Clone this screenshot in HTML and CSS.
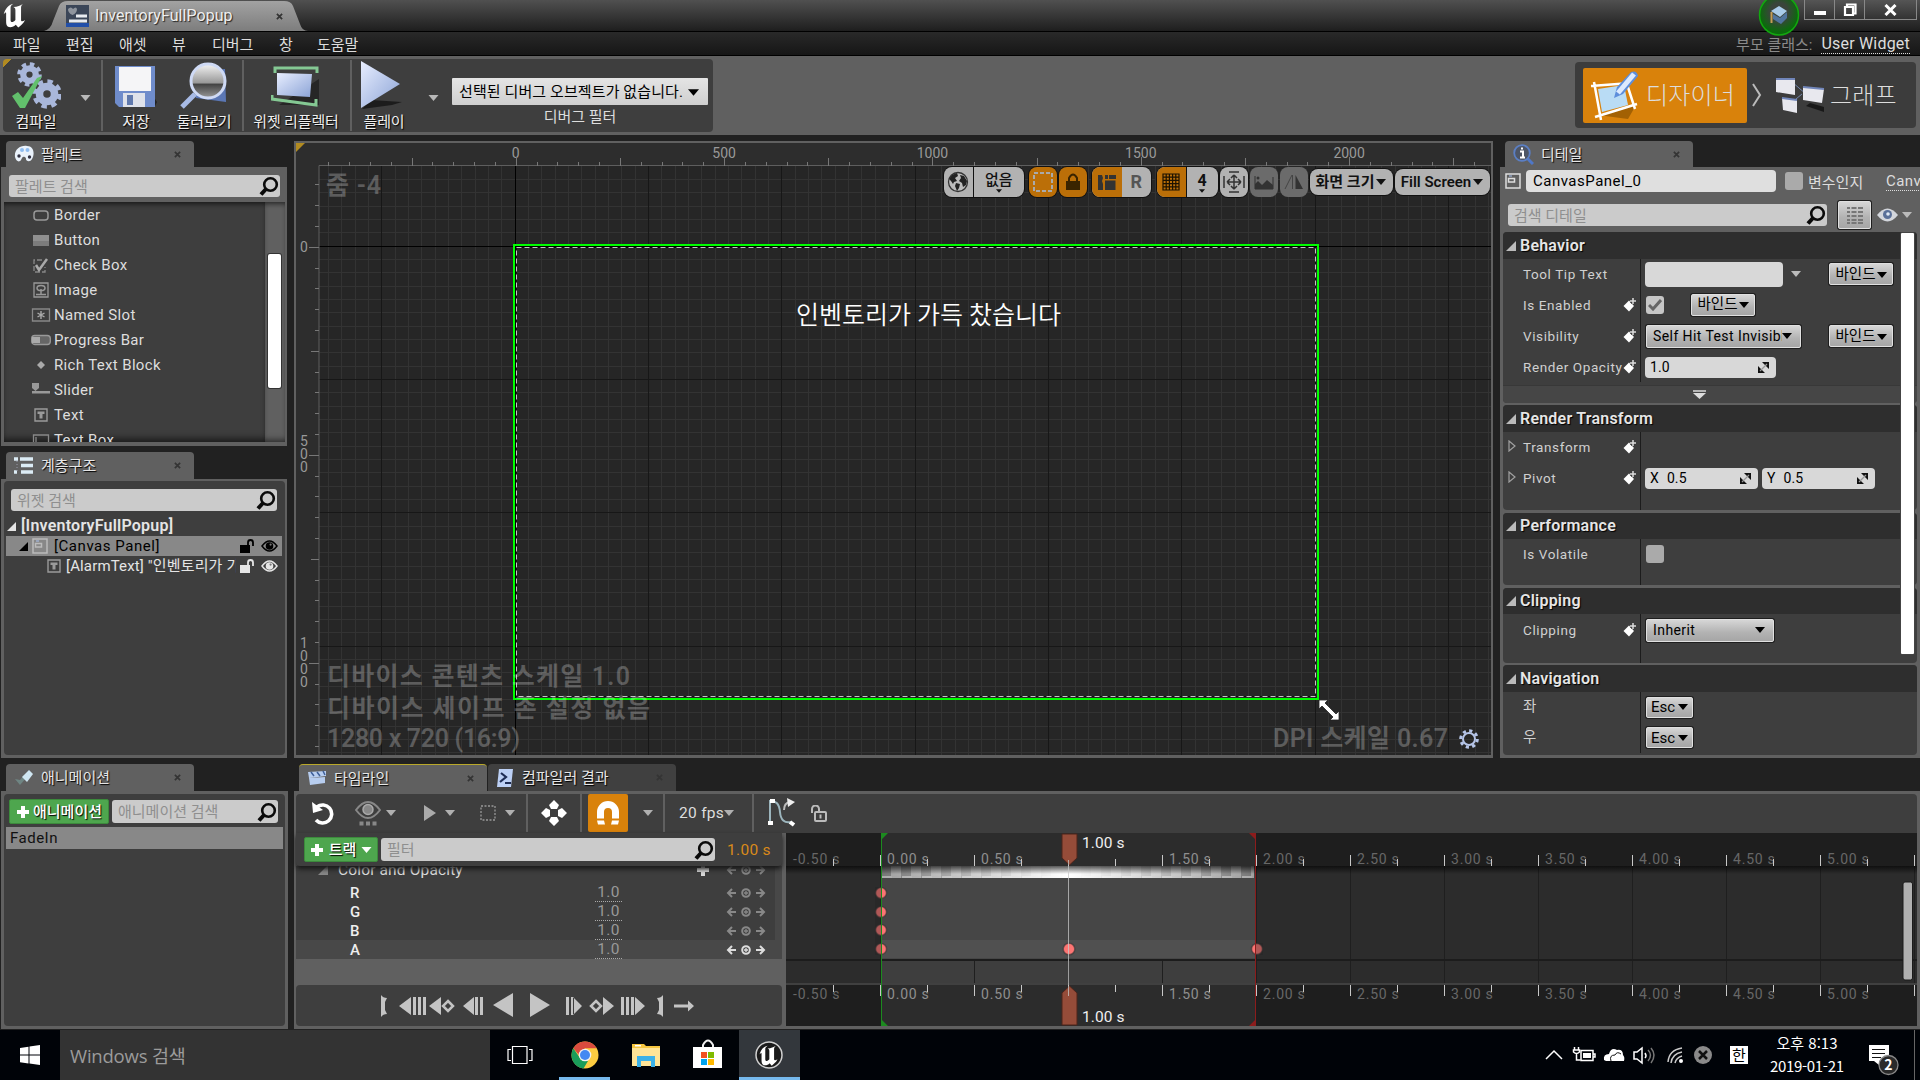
FILE: index.html
```html
<!DOCTYPE html>
<html lang="ko">
<head>
<meta charset="utf-8">
<title>InventoryFullPopup</title>
<link rel="stylesheet" href="styles.css">
</head>
<body>
<svg class="defs" width="0" height="0">
  <defs>
    <linearGradient id="ice" x1="0" y1="0" x2="1" y2="1"><stop offset="0" stop-color="#e8eeff"/><stop offset="1" stop-color="#8ba3d6"/></linearGradient>
    <linearGradient id="lens" x1="0" y1="0" x2="0" y2="1"><stop offset="0" stop-color="#f4f4f4"/><stop offset=".55" stop-color="#999"/><stop offset=".6" stop-color="#444"/><stop offset="1" stop-color="#999"/></linearGradient>
    <symbol id="search" viewBox="0 0 20 20"><circle cx="11.500" cy="8.500" r="6.300" fill="none" stroke="#0a0a0a" stroke-width="2.600"/><path d="M7 13L2 18.500" stroke="#0a0a0a" stroke-width="4"/></symbol>
    <symbol id="close" viewBox="0 0 8 8"><path d="M1 1l6 6M7 1L1 7" stroke="#343434" stroke-width="2"/></symbol>
    <symbol id="down" viewBox="0 0 10 6"><path d="M0 0h10L5 6z" fill="currentColor"/></symbol>
    <symbol id="plus" viewBox="0 0 14 14"><path d="M5 1h4v4h4v4H9v4H5V9H1V5h4z" fill="#fff"/></symbol>
    <symbol id="tri" viewBox="0 0 10 10"><path d="M10 0v10H0z" fill="currentColor"/></symbol>
    <symbol id="key" viewBox="0 0 14 14"><path d="M6 2.500L11 8l-5 5.500L.5 8z" fill="#fff"/><path d="M10 0v6M7 3h6" stroke="#3e3e3e" stroke-width="3.500"/><path d="M10 0v6M7 3h6" stroke="#ddd" stroke-width="1.500"/></symbol>
    <symbol id="spin" viewBox="0 0 11 11"><path d="M4 0h7v7zM0 4v7h7z" fill="#111"/><path d="M2 9l7-7" stroke="#999" stroke-width="1.200"/></symbol>
    <symbol id="gear" viewBox="0 0 24 24"><circle cx="12" cy="12" r="6" fill="none" stroke="currentColor" stroke-width="6"/><circle cx="12" cy="12" r="9.800" fill="none" stroke="currentColor" stroke-width="4" stroke-dasharray="4.200 3.500"/></symbol>
    <symbol id="unlock" viewBox="0 0 16 14"><path d="M1 6h10v8H1z" fill="currentColor"/><path d="M9 6V3.500a2.500 2.500 0 0 1 5 0V7" fill="none" stroke="currentColor" stroke-width="1.800"/></symbol>
    <symbol id="eye" viewBox="0 0 17 12"><path d="M1 6Q8.500-4 16 6 8.500 16 1 6z" fill="none" stroke="currentColor" stroke-width="1.500"/><circle cx="8.500" cy="6" r="3.800" fill="currentColor"/><circle cx="9.600" cy="4.600" r="1.100" fill="#777"/></symbol>
    <symbol id="panel" viewBox="0 0 16 16"><path d="M1 1h14v14H1z" fill="none" stroke="currentColor" stroke-width="1.500"/><path d="M3.500 5.500h6v3.500h-6z" fill="none" stroke="currentColor" stroke-width="1.500"/><path d="M4 3h3" stroke="#a9c2f0"/></symbol>
    <symbol id="tbox" viewBox="0 0 14 14"><path d="M1 1h12v12H1z" fill="none" stroke="#9a9a9a" stroke-width="1.400"/><path d="M3.500 3.500h7V6h-2v4.500h-3V6h-2z" fill="#9a9a9a"/></symbol>
    <symbol id="nav" viewBox="0 0 40 12"><path d="M10 6H3M6 2L2 6l4 4M30 6h7M34 2l4 4-4 4" fill="none" stroke="currentColor" stroke-width="2"/><circle cx="20" cy="6" r="3.800" fill="none" stroke="currentColor" stroke-width="2"/><path d="M20 4v4M18 6h4" stroke="currentColor" stroke-width="1.300"/></symbol>
    <symbol id="ue" viewBox="0 0 28 31"><path d="M0 14C2 7 6 2 12 1c-3 2-3.500 3-3.500 5v15c0 3.500 3 3.500 6 0V9c0-3-1-3-2.500-4 5 0 9-2 12-4-2 2-2.500 3-2.500 5v15c0 2 2 2 5 0-2 5-6 7-8.500 9.500L15 27c-2 2-4 3-7 3-4 0-5-3-5-7V13c0-2-1-1-3 1z" fill="#fff"/></symbol>
  </defs>
</svg>

<header class="titlebar">
  <svg class="ue-logo" preserveAspectRatio="none"><use href="#ue"/></svg>
  <div class="doc-tab">
    <svg width="23" height="22" viewBox="0 0 23 22"><path d="M0 0h23v22H0z" fill="#3b4658"/><path d="M0 18h23v4H0z" fill="#224fa8"/><path d="M2 4q3-3 5 0 3-3 4 0 0 4-4.500 6Q2 8 2 4z" fill="#8f959e"/><path d="M10 11h11M3 16h18" stroke="#e8ebf0" stroke-width="3"/></svg>
    <span>InventoryFullPopup</span>
    <svg class="x" width="7" height="7"><use href="#close"/></svg>
  </div>
  <svg class="tutorial" width="42" height="36" viewBox="0 0 42 36"><defs><radialGradient id="glow" cx=".5" cy=".42"><stop offset=".45" stop-color="#3a443b"/><stop offset="1" stop-color="#0b6a0c"/></radialGradient></defs><ellipse cx="21" cy="15" rx="19.500" ry="20" fill="url(#glow)" stroke="#12a80f" stroke-width="1.500"/><path d="M21 6l8 5-7 6-9-6z" fill="#a9cbe9"/><path d="M15 14l7 4 7-6v6l-6 6-8-5z" fill="#51749d"/><path d="M13.500 12v11" stroke="#c59c57" stroke-width="2"/></svg>
  <div class="win-buttons">
    <span><svg width="14" height="12"><path d="M1 9h12" stroke="#fff" stroke-width="4"/></svg></span>
    <span><svg width="14" height="14"><path d="M4 3V1.500h8.500v9H11M2 4h8v8H2z" fill="none" stroke="#fff" stroke-width="2.200"/></svg></span>
    <span><svg width="13" height="12"><path d="M1.500 1l10 10M11.500 1l-10 10" stroke="#fff" stroke-width="3"/></svg></span>
  </div>
</header>

<nav class="menubar">
  <span class="m1">파일</span><span class="m2">편집</span><span class="m3">애셋</span><span class="m4">뷰</span><span class="m5">디버그</span><span class="m6">창</span><span class="m7">도움말</span>
  <div class="parent"><span class="dim">부모 클래스:</span><a>User Widget</a></div>
</nav>

<section class="toolbar">
  <div class="tools">
    <div class="tool compile">
      <svg width="50" height="48" viewBox="0 0 50 48"><g color="#a9b7da"><use href="#gear" x="6" y="0" width="25" height="25"/><use href="#gear" x="21" y="17" width="30" height="30"/></g><path d="M1 34l6-4 5 6 14-20 5-2-17 32h-5z" fill="#62c06c"/></svg>
      <span>컴파일</span>
    </div>
    <svg class="arrow a1" width="11" height="6"><use href="#down"/></svg>
    <i class="sep"></i>
    <div class="tool save">
      <svg width="44" height="46" viewBox="0 0 44 46"><path d="M5 42l36 0 2-4-4-6z" fill="#222"/><path d="M1 2h40v41H5l-4-4z" fill="#6f8ccb"/><path d="M5 3h32v24H5z" fill="#f5f5f7"/><path d="M9 29h22v14H9z" fill="#dfe2ea"/><path d="M13 31h6v10h-6z" fill="#6079ad"/></svg>
      <span>저장</span>
    </div>
    <div class="tool browse">
      <svg width="50" height="48" viewBox="0 0 50 48"><path d="M12 16l8-7 26-2 1 33-30-4z" fill="#5b77b5"/><path d="M16 32L3 45" stroke="#a8bbe6" stroke-width="5"/><circle cx="29" cy="19" r="17" fill="url(#lens)" stroke="#cfdaf5" stroke-width="3"/></svg>
      <span>둘러보기</span>
    </div>
    <i class="sep"></i>
    <div class="tool reflect">
      <svg width="50" height="42" viewBox="0 0 50 42"><path d="M8 40h40V14z" fill="#262626"/><path d="M6 8l35 1-2 23-33-2z" fill="url(#ice)"/><path d="M4 8V3h42v5M1 30v4l44 6v-6" fill="none" stroke="#84c893" stroke-width="3"/></svg>
      <span>위젯 리플렉터</span>
    </div>
    <i class="sep"></i>
    <div class="tool play">
      <svg width="44" height="50" viewBox="0 0 44 50"><path d="M2 49l9-9 31 2-10 3z" fill="#1c1c1c"/><path d="M1 1l39 23L1 48z" fill="url(#ice)"/></svg>
      <span>플레이</span>
    </div>
    <svg class="arrow a2" width="11" height="6"><use href="#down"/></svg>
    <div class="debug">
      <div class="debug-combo"><span>선택된 디버그 오브젝트가 없습니다.</span><svg width="11" height="7"><use href="#down"/></svg></div>
      <span>디버그 필터</span>
    </div>
  </div>
  <div class="modes">
    <div class="mode active">
      <svg width="54" height="52" viewBox="0 0 54 52"><path d="M10 46l38-10-8 14z" fill="#8c5200" opacity=".7"/><path d="M3 17l40-3M7 48l42-13M6 13l7 38M38 12l9 28" stroke="#fff" stroke-width="2.500"/><path d="M10 20l26-4 4 20-26 7z" fill="#b9dcf5"/><path d="M26 29l3-11L43 3q6-2 7 4L35 25z" fill="#5d8edb"/><path d="M30 24L46 5" stroke="#dceaff" stroke-width="5"/></svg>
      <span>디자이너</span>
    </div>
    <svg class="chev" width="12" height="26"><path d="M2 2l7 11-7 11" fill="none" stroke="#bbb" stroke-width="2"/></svg>
    <div class="mode">
      <svg width="52" height="38" viewBox="0 0 52 38"><path d="M32 30l18 6v-5L36 27z" fill="#181818"/><path d="M18 6l14 12M16 28l12-10" stroke="#7387ad"/><path d="M2 3l19 1v15L2 16zM29 11l21 2-2 14-19-3zM8 22l15 2v13L9 34z" fill="#e8e8ee"/><path d="M2 3h19M29 11l21 2M8 22l15 2" stroke="#7186ba" stroke-width="2"/></svg>
      <span>그래프</span>
    </div>
  </div>
</section>

<main class="workspace">
  <div class="upper">
    <div class="left-col">
      <section class="dock palette">
        <div class="tab"><svg width="20" height="18" viewBox="0 0 20 18"><path d="M1 12C0 5 6 0 13 1c7 0 8 8 5 13-2 4-7 2-6-1-3-3-4 0-5 2-2 3-5 1-6-3z" fill="#eaf2fb"/><circle cx="5" cy="11" r="1.700" fill="#334"/><circle cx="15.500" cy="12" r="1.700" fill="#334"/><circle cx="8" cy="5" r="2" fill="#8fbdf0"/><circle cx="13.500" cy="5" r="2" fill="#8fbdf0"/></svg><span>팔레트</span><svg class="x" width="7" height="7"><use href="#close"/></svg></div>
        <div class="dock-body">
          <div class="search"><span>팔레트 검색</span><svg width="20" height="20"><use href="#search"/></svg></div>
          <div class="palette-area">
            <ul class="palette-list">
              <li><svg viewBox="0 0 20 16"><rect x="3" y="4" width="14" height="9" rx="3" fill="none" stroke="#999" stroke-width="1.500"/></svg>Border</li>
              <li><svg viewBox="0 0 20 16"><path d="M2 3h16v11H2z" fill="#8f8f8f"/><path d="M2 9h16v5H2z" fill="#7c7c7c"/></svg>Button</li>
              <li><svg viewBox="0 0 20 16"><path d="M11 3H3v12h11v-5" fill="none" stroke="#888" stroke-width="1.300" stroke-dasharray="5 2"/><path d="M5 8l3 5 8-11" fill="none" stroke="#aaa" stroke-width="2.500"/></svg>Check Box</li>
              <li><svg viewBox="0 0 20 16"><path d="M3 1h14v14H3z" fill="none" stroke="#999" stroke-width="1.300"/><ellipse cx="10" cy="6" rx="4" ry="2.600" fill="none" stroke="#999" stroke-width="1.500"/><path d="M10 7v5M5 12.500h10" stroke="#999" stroke-width="1.500"/></svg>Image</li>
              <li><svg viewBox="0 0 20 16"><path d="M1.500 2h17v12h-17z" fill="none" stroke="#888" stroke-width="1.300"/><path d="M10 4v8M6.500 6l7 4M13.500 6l-7 4" stroke="#aaa" stroke-width="1.400"/></svg>Named Slot</li>
              <li><svg viewBox="0 0 20 16"><rect x=".7" y="3.500" width="18.600" height="9" rx="3" fill="#666" stroke="#999" stroke-width="1.300"/><path d="M1 5h8v6H1z" fill="#aaa"/></svg>Progress Bar</li>
              <li><svg viewBox="0 0 20 16"><path d="M10 4l4 4-4 4-4-4z" fill="#aaa"/></svg>Rich Text Block</li>
              <li><svg viewBox="0 0 20 16"><path d="M1 1h7v5L4.500 9 1 6zM1 9h18v2.500H1z" fill="#999"/></svg>Slider</li>
              <li><svg viewBox="0 0 20 16"><use href="#tbox" x="3" y="1" width="14" height="14"/></svg>Text</li>
              <li><svg viewBox="0 0 20 16"><path d="M2.500 3h15v10h-15zM5 5v6" fill="none" stroke="#888" stroke-width="1.300"/></svg>Text Box</li>
            </ul>
            <div class="gutter"><div class="thumb"></div></div>
          </div>
        </div>
      </section>
      <section class="dock hierarchy">
        <div class="tab"><svg width="20" height="17" viewBox="0 0 20 17"><path d="M0 2h4M0 15h3M6 2h13M7 8.500h12M7 15h12" stroke="#dcecf5" stroke-width="3.400"/><path d="M3 4v11" stroke="#99a" stroke-dasharray="1 2"/></svg><span>계층구조</span><svg class="x" width="7" height="7"><use href="#close"/></svg></div>
        <div class="dock-body">
          <div class="inner">
            <div class="search"><span>위젯 검색</span><svg width="20" height="20"><use href="#search"/></svg></div>
            <div class="tree root"><svg width="9" height="9"><use href="#tri"/></svg><b>[InventoryFullPopup]</b></div>
            <div class="tree sel"><svg width="9" height="9"><use href="#tri"/></svg><svg class="pi" width="16" height="16"><use href="#panel"/></svg><span>[Canvas Panel]</span><svg class="lk" width="16" height="14"><use href="#unlock"/></svg><svg width="17" height="12"><use href="#eye"/></svg></div>
            <div class="tree child"><svg width="14" height="14"><use href="#tbox"/></svg><span>[AlarmText] "인벤토리가 가득</span><svg class="lk" width="16" height="14"><use href="#unlock"/></svg><svg width="17" height="12"><use href="#eye"/></svg></div>
          </div>
        </div>
      </section>
    </div>

    <section class="designer">
      <svg class="surface" viewBox="296 143 1195 612">
        <path d="M296 143h1195v612H296z" fill="#2d2d2d"/>
        <path d="M319 166h1172v589H319z" fill="#262626"/>
        <g id="grid" shape-rendering="crispEdges"></g>
        <path d="M319 755V165.500h1172" fill="none" stroke="#5e5e5e"/>
        <g id="ruler" shape-rendering="crispEdges"></g>
        <path d="M296 143h9l-9 9z" fill="#b28b21"/>
        <text x="928.500" y="324" class="popup-text" text-anchor="middle" textLength="265">인벤토리가 가득 찼습니다</text>
        <path d="M516.500 247.500h799v449h-799z" fill="none" stroke="#111"/>
        <path d="M516.500 247.500h799v449h-799z" fill="none" stroke="#c4c4c4" stroke-dasharray="5 3"/>
        <path d="M514 245h804v454H514z" fill="none" stroke="#0f0" stroke-width="2"/>
        <path d="M1319 700h9l-3 3 11 11 3-3v9h-9l3-3-11-11-3 3z" fill="#fff" stroke="#222" stroke-width=".8"/>
        <g class="info"><text x="326" y="194" textLength="55">줌 -4</text><text x="327" y="685" textLength="303">디바이스 콘텐츠 스케일 1.0</text><text x="327" y="717" textLength="323">디바이스 세이프 존 설정 없음</text><text x="327" y="747" textLength="193">1280 x 720 (16:9)</text><text x="1273" y="747" textLength="175">DPI 스케일 0.67</text></g>
        <g color="#b6c5e8"><circle cx="1469" cy="739" r="6" fill="none" stroke="currentColor" stroke-width="2"/><circle cx="1469" cy="739" r="8.300" fill="none" stroke="currentColor" stroke-width="3" stroke-dasharray="3.200 3.300"/></g>
      </svg>
      <div class="canvas-tools">
        <div class="ct pair g5"><span class="w29"><svg width="22" height="22" viewBox="0 0 22 22"><circle cx="11" cy="11" r="9.500" fill="#bbb" stroke="#333" stroke-width="1.300"/><path d="M2 8l3-4 5-2 1 3-3 2 2 3-3 1-1 2-2-3zM9 12l4 1-1 4-2 3-2-5zM13 4l4 1 3 5-1 4-3 2-1-4-3-2 2-3z" fill="#222"/></svg></span><span class="w50 col">없음<svg width="6" height="4"><use href="#down"/></svg></span></div>
        <div class="ct on w28 g2"><svg width="22" height="22"><path d="M2 2h18v18H2z" fill="none" stroke="#aaa" stroke-width="2" stroke-dasharray="4 2"/></svg></div>
        <div class="ct on w28 g5"><svg width="16" height="18"><path d="M1 8h14v9H1z" fill="#3a2400"/><path d="M4 8V5q4-7 8 0v3" fill="none" stroke="#3a2400" stroke-width="2"/></svg></div>
        <div class="ct pair g6"><span class="on w29 nb"><svg width="20" height="18"><path d="M1 2h4l1 3-1 3 1 3v6H1zM8 2h3v4H8zM12 2h7v4h-7zM8 7.500h10.500V17H8z" fill="#333"/></svg></span><span class="w29 r">R</span></div>
        <div class="ct pair g2"><span class="on w29"><svg width="18" height="18"><path d="M1 1h16v16H1zM4.200 1v16M7.400 1v16M10.600 1v16M13.800 1v16M1 4.200h16M1 7.400h16M1 10.600h16M1 13.800h16" fill="none" stroke="#1d1200" stroke-width="1.200"/></svg></span><span class="w30 col b">4<svg width="6" height="4"><use href="#down"/></svg></span></div>
        <div class="ct w28 g2"><svg width="22" height="22"><path d="M11 4v14M4 11h14M11 4L8 7M11 4l3 3M11 18l-3-3M11 18l3-3M4 11l3-3M4 11l3 3M18 11l-3-3M18 11l-3 3M6 1h10M6 21h10M1 5v12M21 5v12" stroke="#333" fill="none" stroke-width="1.500"/></svg></div>
        <div class="ct off w28 g2"><svg width="20" height="15"><path d="M1 1v13h18V2" fill="none" stroke="#333"/><path d="M1 14V9l3-3 4 4 5-5 6 5v4z" fill="#333"/><circle cx="4" cy="3" r="1.500" fill="#333"/></svg></div>
        <div class="ct off w28 g2"><svg width="20" height="16"><path d="M11.500 1v14H19z" fill="#333"/><path d="M8 1L1 15M8.500 1v14" fill="none" stroke="#444"/></svg></div>
        <div class="ct text w83 g2">화면 크기<svg width="10" height="6"><use href="#down"/></svg></div>
        <div class="ct text w95">Fill Screen<svg width="10" height="6"><use href="#down"/></svg></div>
      </div>
    </section>

    <section class="dock details">
      <div class="tab"><svg width="21" height="21" viewBox="0 0 21 21"><path d="M14 14l6 6" stroke="#4f77c7" stroke-width="3"/><circle cx="9" cy="9" r="7.800" fill="#4e5666" stroke="#5b7fc4" stroke-width="1.800"/><path d="M7 7.500h3V13M7 13.500h5M9 3.500v2" fill="none" stroke="#fff" stroke-width="2"/></svg><span>디테일</span><svg class="x" width="7" height="7"><use href="#close"/></svg></div>
      <div class="dock-body">
        <div class="name-row"><svg width="16" height="16"><use href="#panel"/></svg><div class="field name">CanvasPanel_0</div><i class="check"></i><span class="isvar">변수인지</span><a>Canv</a></div>
        <div class="find-row"><div class="search"><span>검색 디테일</span><svg width="20" height="20"><use href="#search"/></svg></div><div class="btn matrix"><svg width="18" height="18"><path d="M1 2h3M1 6h3M1 10h3M1 14h3M1 17h3M5.500 2h5M5.500 6h5M5.500 10h5M5.500 14h5M5.500 17h5M12 2h5M12 6h5M12 10h5M12 14h5M12 17h5" stroke="#777" stroke-width="2"/></svg></div><svg class="view" width="21" height="14" viewBox="0 0 21 14"><path d="M0 7Q10.500-6 21 7 10.500 20 0 7z" fill="#d3d6dc"/><circle cx="10.500" cy="6.500" r="4.500" fill="#5a7099"/><circle cx="11" cy="6" r="1.800" fill="#dfe8f5"/></svg><svg class="vd" width="10" height="6"><use href="#down"/></svg></div>
        <div class="props">
          <div class="sect behavior">
            <h3><svg width="10" height="10"><use href="#tri"/></svg>Behavior</h3>
            <div class="row h30"><label>Tool Tip Text</label><div class="val"><div class="field f138"></div><svg class="vd" width="10" height="6"><use href="#down"/></svg><div class="btn bind push">바인드<svg width="10" height="6"><use href="#down"/></svg></div></div></div>
            <div class="row h31"><label>Is Enabled</label><svg class="k" width="14" height="14"><use href="#key"/></svg><div class="val"><i class="check on"><svg width="14" height="12"><path d="M1 6l4 4 8-9" fill="none" stroke="#666" stroke-width="3"/></svg></i><div class="btn bind mid">바인드<svg width="10" height="6"><use href="#down"/></svg></div></div></div>
            <div class="row h32"><label>Visibility</label><svg class="k" width="14" height="14"><use href="#key"/></svg><div class="val"><div class="btn combo c156"><span>Self Hit Test Invisible</span><svg width="10" height="6"><use href="#down"/></svg></div><div class="btn bind push">바인드<svg width="10" height="6"><use href="#down"/></svg></div></div></div>
            <div class="row h30"><label>Render Opacity</label><svg class="k" width="14" height="14"><use href="#key"/></svg><div class="val"><div class="field num f131">1.0<svg width="11" height="11"><use href="#spin"/></svg></div></div></div>
            <div class="more"><svg width="13" height="9"><path d="M0 1h13" stroke="#ddd" stroke-width="1.500"/><path d="M0 3h13L6.500 9z" fill="#ddd"/></svg></div>
          </div>
          <div class="sect transform">
            <h3><svg width="10" height="10"><use href="#tri"/></svg>Render Transform</h3>
            <div class="row h30"><svg class="ex" width="8" height="12"><path d="M1 1l6 5-6 5z" fill="none" stroke="#a0a0a0" stroke-width="1.200"/></svg><label>Transform</label><svg class="k" width="14" height="14"><use href="#key"/></svg><div class="val"></div></div>
            <div class="row h32"><svg class="ex" width="8" height="12"><path d="M1 1l6 5-6 5z" fill="none" stroke="#a0a0a0" stroke-width="1.200"/></svg><label>Pivot</label><svg class="k" width="14" height="14"><use href="#key"/></svg><div class="val"><div class="field num xy">X<span>0.5</span><svg width="11" height="11"><use href="#spin"/></svg></div><div class="field num xy">Y<span>0.5</span><svg width="11" height="11"><use href="#spin"/></svg></div></div></div>
            <div class="row fill"><label></label><div class="val"></div></div>
          </div>
          <div class="sect perf">
            <h3><svg width="10" height="10"><use href="#tri"/></svg>Performance</h3>
            <div class="row h30"><label>Is Volatile</label><div class="val"><i class="check v"></i></div></div>
            <div class="row fill"><label></label><div class="val"></div></div>
          </div>
          <div class="sect clip">
            <h3><svg width="10" height="10"><use href="#tri"/></svg>Clipping</h3>
            <div class="row h32"><label>Clipping</label><svg class="k" width="14" height="14"><use href="#key"/></svg><div class="val"><div class="btn combo c129"><span>Inherit</span><svg width="10" height="6"><use href="#down"/></svg></div></div></div>
            <div class="row fill"><label></label><div class="val"></div></div>
          </div>
          <div class="sect navi">
            <h3><svg width="10" height="10"><use href="#tri"/></svg>Navigation</h3>
            <div class="row h30"><label class="ko">좌</label><div class="val"><div class="btn esc">Esc<svg width="10" height="6"><use href="#down"/></svg></div></div></div>
            <div class="row h31"><label class="ko">우</label><div class="val"><div class="btn esc">Esc<svg width="10" height="6"><use href="#down"/></svg></div></div></div>
          </div>
          <div class="props-thumb"></div>
        </div>
      </div>
    </section>
  </div>

  <div class="lower">
    <section class="dock anims">
      <div class="tab"><svg width="20" height="18" viewBox="0 0 20 18"><path d="M1 10l5 6 7-8-3-2-4 5z" fill="#6f8583"/><path d="M8 8l7-7 4 4-6 8z" fill="#cfe6f2"/></svg><span>애니메이션</span><svg class="x" width="7" height="7"><use href="#close"/></svg></div>
      <div class="dock-body"><div class="inner">
        <div class="anim-bar"><div class="green"><svg width="14" height="14"><use href="#plus"/></svg>애니메이션</div><div class="search"><span>애니메이션 검색</span><svg width="20" height="20"><use href="#search"/></svg></div></div>
        <div class="anim-item">FadeIn</div>
      </div></div>
    </section>
    <section class="dock timeline">
      <div class="tabs">
        <div class="tab cur"><svg width="20" height="16" viewBox="0 0 20 16"><path d="M1 2l18-1v5L2 8zM2 8l16-1v6L3 15z" fill="#b7cdef"/><path d="M4 2l3 4M10 2l3 4M16 1l2 4" stroke="#3f5f98" stroke-width="1.500"/></svg><span>타임라인</span><svg class="x" width="7" height="7"><use href="#close"/></svg></div>
        <div class="tab back"><svg width="18" height="20" viewBox="0 0 18 20"><path d="M3 1h14l-2 18H1z" fill="#bcd0f5"/><path d="M5 5l5 4-6 5M9 15h6" fill="none" stroke="#1e2d55" stroke-width="2.200"/></svg><span>컴파일러 결과</span><svg class="x" width="7" height="7"><use href="#close"/></svg></div>
      </div>
      <div class="dock-body">
        <div class="seq-bar">
          <svg class="s1" width="25" height="24" viewBox="0 0 25 24"><path d="M6 6A9 9 0 1 1 5 19" fill="none" stroke="#fff" stroke-width="3.600"/><path d="M1 1l1 11 10-3z" fill="#fff"/></svg>
          <svg class="s2" width="26" height="25" viewBox="0 0 26 25"><path d="M1 9Q13-7 25 9 13 25 1 9z" fill="none" stroke="#888" stroke-width="2"/><circle cx="13" cy="8.500" r="5" fill="#888" stroke="#aaa" stroke-width="1.500"/><path d="M4.500 22.500h17" stroke="#888" stroke-width="4" stroke-dasharray="4 2.500"/></svg>
          <svg class="d d1" width="10" height="6"><use href="#down"/></svg>
          <svg class="s3" width="14" height="16"><path d="M1 0l12 8-12 8z" fill="#aaa"/></svg>
          <svg class="d d2" width="10" height="6"><use href="#down"/></svg>
          <svg class="s4" width="16" height="16"><path d="M1 1h14v14H1z" fill="none" stroke="#999" stroke-width="1.300" stroke-dasharray="2 1.500"/></svg>
          <svg class="d d3" width="10" height="6"><use href="#down"/></svg>
          <i class="sep p1"></i>
          <svg class="s5" width="26" height="26" viewBox="0 0 26 26"><path d="M13 0l5 5-2 4h-6L8 5zM13 26l5-5-2-4h-6l-2 4zM0 13l5-5 4 2v6l-4 2zM26 13l-5-5-4 2v6l4 2z" fill="#fff"/></svg>
          <i class="sep p2"></i>
          <div class="magnet"><svg width="24" height="26" viewBox="0 0 24 26"><path d="M4.500 18.500V12a7.500 7.500 0 0 1 15 0v6.500" fill="none" stroke="#fff" stroke-width="7"/><path d="M1 20.500h7l1 4H2zM16 20.500h7l-1 4h-7z" fill="#fff"/></svg></div>
          <svg class="d d4" width="10" height="6"><use href="#down"/></svg>
          <i class="sep p3"></i>
          <span class="fps">20 fps</span><svg class="d d5" width="10" height="6"><use href="#down"/></svg>
          <i class="sep p4"></i>
          <svg class="s6" width="30" height="30" viewBox="0 0 30 30"><path d="M3 26V3q9-1 10 11t11 10" fill="none" stroke="#9cb5bd" stroke-width="2"/><path d="M1 25h5M3 3h5M23 24l4 3" stroke="#fff" stroke-width="4"/><path d="M17 12q0-7 6-8" fill="none" stroke="#bbb" stroke-width="2"/><path d="M20 0l8 4-7 5z" fill="#eee"/></svg>
          <svg class="s7" width="17" height="17" viewBox="0 0 17 17"><path d="M2 8V4a3.500 3.500 0 0 1 7 0v3" fill="none" stroke="#bbb" stroke-width="2"/><rect x="5" y="7" width="11" height="9" rx="1" fill="none" stroke="#bbb" stroke-width="2"/><path d="M10.500 9.500v4" stroke="#bbb" stroke-width="2"/></svg>
        </div>
        <div class="seq-main">
          <div class="seq-left">
            <div class="filter-bar"><div class="green"><svg width="14" height="14"><use href="#plus"/></svg>트랙<svg width="11" height="6"><use href="#down"/></svg></div><div class="search"><span>필터</span><svg width="20" height="20"><use href="#search"/></svg></div><span class="now">1.00 s</span></div>
            <div class="tracks">
              <div class="track group"><svg width="10" height="10"><use href="#tri"/></svg><span>Color and Opacity</span><svg class="add" width="14" height="14"><use href="#plus"/></svg><svg class="nv" width="40" height="12"><use href="#nav"/></svg></div>
              <div class="track"><b>R</b><u>1.0</u><svg class="nv" width="40" height="12"><use href="#nav"/></svg></div>
              <div class="track"><b>G</b><u>1.0</u><svg class="nv" width="40" height="12"><use href="#nav"/></svg></div>
              <div class="track"><b>B</b><u>1.0</u><svg class="nv" width="40" height="12"><use href="#nav"/></svg></div>
              <div class="track hl"><b>A</b><u>1.0</u><svg class="nv" width="40" height="12"><use href="#nav"/></svg></div>
            </div>
            <div class="transport">
              <svg width="486" height="41" viewBox="296 985 486 41"><g fill="#c4c4c4"><path d="M381 995q2 3 6 3l-2 4v8l2 4q-4 0-6 3z"/><path d="M399 1006l12-9v18zM413 997h3v18h-3zM418 997h3v18h-3zM423 997h3v18h-3z"/><path d="M429 1006l12-9v18z"/><path d="M463 1006l11-9v18zM475 997h3v18h-3zM480 997h3v18h-3z"/><path d="M493 1005l20-12v24zM550 1005l-20-12v24zM566 997h3v18h-3zM571 997h3v18h-3zM582 1006l-9-9v18z"/><path d="M614 1006l-11-9v18zM621 997h3v18h-3zM626 997h3v18h-3zM631 997h3v18h-3zM645 1006l-10-9v18z"/><path d="M663 995q-2 3-6 3l2 4v8l-2 4q4 0 6 3zM674 1004.500h14v-4l6 5.500-6 5.500v-4h-14z"/></g><path d="M448 1001l5 5-5 5-5-5zM596 1001l5 5-5 5-5-5z" fill="none" stroke="#c4c4c4" stroke-width="2.500"/></svg>
            </div>
          </div>
          <svg class="seq-view" viewBox="786 833 1131 193">
            <defs>
              <pattern id="checker" x="881" y="856" width="20" height="20" patternUnits="userSpaceOnUse"><path d="M0 0h20v20H0z" fill="#777"/><path d="M10 0h10v20H10z" fill="#a0a0a0"/></pattern>
              <linearGradient id="fade"><stop offset="0" stop-color="#fff" stop-opacity="0"/><stop offset=".5" stop-color="#fff"/><stop offset="1" stop-color="#fff" stop-opacity="0"/></linearGradient>
              <linearGradient id="shade" x1="0" y1="0" x2="0" y2="1"><stop offset="0" stop-color="#000" stop-opacity=".65"/><stop offset="1" stop-color="#000" stop-opacity="0"/></linearGradient>
            </defs>
            <path d="M786 833h1131v193H786z" fill="#1e1e1e"/>
            <path d="M786 866h1131v117H786z" fill="#2c2c2c"/>
            <path d="M881 833h374v193H881z" fill="#2c2c2c"/>
            <path d="M881 866h374v117H881z" fill="#3e3e3e"/>
            <g id="seq-grid" shape-rendering="crispEdges"></g>
            <path d="M881 866h374v93H881z" fill="#464646"/><path d="M881 940h374v18H881z" fill="#505050"/>
            <path d="M882 866h372v12H882z" fill="url(#checker)"/><path d="M882 877h372" stroke="#aaa" stroke-width="2" stroke-dasharray="10"/><path d="M882 866h372v12H882z" fill="url(#fade)"/>
            <path d="M786 866h1131v8H786z" fill="url(#shade)"/><path d="M786 960h1131" stroke="#1c1c1c" stroke-width="2"/><path d="M786 984h1131" stroke="#404040" stroke-width="2"/>
            <g id="seq-ticks" shape-rendering="crispEdges"></g>
            <g fill="#fd7573" stroke="#333" stroke-opacity=".6" stroke-width="1.500"><circle cx="881" cy="893" r="5.500"/><circle cx="881" cy="912" r="5.500"/><circle cx="881" cy="930" r="5.500"/><circle cx="881" cy="949" r="5.500"/><circle cx="1069" cy="949" r="5.800"/><circle cx="1257" cy="949" r="5.500"/></g>
            <path d="M875 887h6v68h-6zM1256 943h7v12h-7z" fill="#222" opacity=".35"/>
            <path d="M881.500 833v193" stroke="#1c8a1f"/><path d="M881 833h7l-7 7zM881 1026h7l-7-7z" fill="#1c8a1f"/>
            <path d="M1255.500 833v193" stroke="#8c1c1c"/><path d="M1256 833h-7l7 7zM1256 1026h-7l7-7z" fill="#8c1c1c"/>
            <path d="M1062 834h15v24l-7.500 7-7.500-7zM1062 1025h15v-32l-7.500-7-7.500 7z" fill="#954c39" stroke="#4d241b"/>
            <path d="M1068.500 860v136" stroke="#c8c8c8" opacity=".75"/>
            <text x="1082" y="848" class="head-time">1.00 s</text><text x="1082" y="1021.500" class="head-time">1.00 s</text>
            <rect x="1903" y="882" width="9.500" height="98" rx="2" fill="#b0b0b0" stroke="#1a1a1a"/>
          </svg>
        </div>
      </div>
    </section>
  </div>
</main>

<footer class="taskbar">
  <div class="start"><svg width="20" height="20"><path d="M0 3l8.500-1.300V9.500H0zM9.500 1.500L20 0v9.500H9.500zM0 10.500h8.500v8L0 17.300zM9.500 10.500H20V20L9.500 18.600z" fill="#fff"/></svg></div>
  <div class="win-search">Windows 검색</div>
  <div class="app tv"><svg width="26" height="20"><path d="M5.500 1.500h14.500v17H5.500zM4 4.500H1v11h3M22 4.500h3v11h-3" fill="none" stroke="#fff" stroke-width="1.200"/></svg></div>
  <div class="app run chrome"><svg width="28" height="28" viewBox="0 0 28 28"><circle cx="14" cy="14" r="13.500" fill="#fdcd41"/><path d="M2.300 7.300A13.500 13.500 0 0 1 25.700 7.300H14L8 14z" fill="#da4b3e"/><path d="M2.300 7.300L9 17l8 3-4.500 7.500A13.500 13.500 0 0 1 2.300 7.300z" fill="#1a9d5a"/><circle cx="14" cy="14" r="6.300" fill="#f2f2f2"/><circle cx="14" cy="14" r="5" fill="#4489f2"/></svg></div>
  <div class="app folder"><svg width="28" height="24" viewBox="0 0 28 24"><path d="M0 1h12l2 2h14v20H0z" fill="#f5c640"/><path d="M0 5h28v18H0z" fill="#fee497"/><path d="M3 2h6v1.500H3z" fill="#fff"/><path d="M5 24V13h18v11h-4v-6H9v6z" fill="#3bb1e8"/></svg></div>
  <div class="app store"><svg width="30" height="30" viewBox="0 0 30 30"><path d="M10 10V6q5-9 10 0v4" fill="none" stroke="#eee" stroke-width="2"/><path d="M0 8h29v21H0z" fill="#fff"/><path d="M8 13h6v6H8z" fill="#f25022"/><path d="M15 13h6v6h-6z" fill="#7fba00"/><path d="M8 20h6v6H8z" fill="#00a4ef"/><path d="M15 20h6v6h-6z" fill="#ffb900"/></svg></div>
  <div class="app run unreal"><svg width="28" height="28" viewBox="0 0 28 28"><circle cx="14" cy="14" r="13" fill="#1a1a1a" stroke="#d0d0d0" stroke-width="1.500"/><use href="#ue" x="3.500" y="4" width="21" height="21"/></svg></div>
  <svg class="tray" width="370" height="50" viewBox="1550 1030 370 50">
    <g fill="none" stroke="#fff" stroke-width="1.500">
      <path d="M1546 1059l8-8 8 8"/>
      <path d="M1581 1050.500h12v10h-12zM1593 1054h2v3h-2M1574.500 1047v3M1578.500 1047v3"/><path d="M1573.500 1050h6v2q-3 3-6 0zM1576.500 1053v7h4"/>
      <path d="M1634 1052h3l5-4v15l-5-4h-3zM1645 1053q2 3 0 5"/><path d="M1648 1050q5 5 0 11M1651 1048q6 7 0 15" stroke="#777"/>
      <path d="M1668 1062q1-12 14-14M1671 1063q1-9 11-11M1675 1063q1-5 7-7" stroke="#ccc"/>
    </g>
    <path d="M1583 1053h8v5h-8zM1604 1060q-1-6 5-6 2-7 8-4 6-1 6 5 2 2 1 6h-18z" fill="#fff"/><path d="M1611 1061q-2-6 4-6 2-4 6-1" fill="none" stroke="#111"/><circle cx="1681" cy="1061" r="2" fill="#fff"/>
    <circle cx="1703" cy="1055" r="9" fill="#8a8a8a"/><path d="M1699 1051l8 8M1707 1051l-8 8" stroke="#111" stroke-width="2.500"/>
    <path d="M1730 1046h18v18h-18z" fill="#fff"/><text x="1739" y="1061" text-anchor="middle" class="ime">한</text>
    <text x="1807" y="1049" text-anchor="middle" textLength="61">오후 8:13</text><text x="1807" y="1072" text-anchor="middle" textLength="74">2019-01-21</text>
    <path d="M1869 1045h20v16h-10v4l-5-4h-5z" fill="#fff"/><path d="M1872 1049.500h13M1872 1053.500h13M1872 1057.500h9" stroke="#111"/>
    <circle cx="1888.500" cy="1065" r="9.500" fill="#2a2a2a" stroke="#888" stroke-width="1.300"/><text x="1888.500" y="1070" text-anchor="middle" class="badge">2</text>
    <path d="M1914.500 1030v50" stroke="#666"/>
  </svg>
</footer>
<script src="script.js"></script>
</body>
</html>
```
FILE: styles.css
```css
* { box-sizing: border-box; }
body { margin: 0; width: 1920px; height: 1080px; overflow: hidden; display: flex; flex-direction: column; background: #212121; color: #ddd; font-family: Roboto, "Noto Sans CJK KR", sans-serif; font-size: 15px; line-height: 18px; }
svg { flex: none; display: block; }
.defs { position: absolute; }
span, label { white-space: nowrap; }

.titlebar { height: 32px; flex: none; display: flex; align-items: flex-start; background: linear-gradient(#505050, #1e1e1e); border-bottom: 1px solid #000; }
.ue-logo { width: 28px; height: 25px; margin: 3px 0 0 1px; }
.doc-tab { width: 264px; height: 30px; margin: 1px 0 0 15px; padding: 0 0 0 22px; display: flex; align-items: center; background: linear-gradient(#a2a2a2, #7d7d7d); clip-path: path("M0 30Q7 28 9 20L15 5Q17 0 24 0H240Q247 0 249 5L256 23Q258 30 264 30z"); color: #eee; font-size: 16px; text-shadow: 1px 1px 1px #222; }
.doc-tab span { margin-left: 6px; width: 181px; letter-spacing: .05px; }
.tutorial { margin-left: auto; z-index: 1; }
.win-buttons { display: flex; margin: 0 3px 0 4px; height: 20px; border: 1px solid #888; border-top: 0; }
.win-buttons span { width: 30px; display: flex; align-items: center; justify-content: center; border-right: 1px solid #888; background: linear-gradient(#555, #333); }
.win-buttons span:last-child { width: 51px; border: 0; }

.menubar { height: 24px; flex: none; display: flex; align-items: center; background: linear-gradient(#292929, #161616); border-bottom: 1px solid #000; padding: 2px 0 0 13px; }
.menubar .m1 { width: 53px; } .menubar .m2 { width: 53px; } .menubar .m3 { width: 53px; } .menubar .m4 { width: 40px; } .menubar .m5 { width: 67px; } .menubar .m6 { width: 38px; }
.parent { margin: 0 10px 0 auto; display: flex; gap: 9px; }
.parent .dim { color: #8a8a8a; }
.parent a { border-bottom: 1px dotted #ddd; font-size: 16px; line-height: 16px; letter-spacing: .2px; }

.toolbar { height: 79px; flex: none; background: #606060; display: flex; justify-content: space-between; padding: 3px 4px 3px 3px; }
.tools { width: 710px; height: 73px; background: linear-gradient(135deg, #b28b21 6px, #3e3e3e 6px); border-radius: 4px; display: flex; align-items: center; }
.tool { height: 73px; flex: none; display: flex; flex-direction: column; align-items: center; justify-content: flex-end; padding-bottom: 1px; font-size: 15px; text-shadow: 1px 1px 1px #000; }
.tool svg { margin-bottom: 3px; }
.tool span { color: #eee; letter-spacing: -.15px; }
.compile { width: 66px; } .save { width: 66px; } .browse { width: 70px; margin-right: 3px; } .reflect { width: 104px; margin-right: 2px; } .play { width: 64px; }
.compile svg { margin-left: -1px; }
.play svg { margin-left: -5px; }
.reflect svg { margin-bottom: 6px; }
.arrow { color: #b8b8b8; }
.a1 { margin: 5px 10px 0 11px; } .a2 { margin: 5px 13px 0 12px; }
.sep { width: 2px; height: 71px; background: #606060; flex: none; }
.debug { margin-left: auto; padding: 12px 5px 0 0; display: flex; flex-direction: column; align-items: center; gap: 4px; font-size: 15px; }
.debug-combo { width: 256px; height: 27px; background: linear-gradient(#e4e4e4, #cfcfcf); color: #000; display: flex; align-items: center; justify-content: space-between; padding: 1px 9px 0 7px; border-radius: 1px; }
.debug-combo span { letter-spacing: .1px; }
.debug > span { line-height: 16px; }
.modes { width: 341px; height: 66px; margin-top: 3px; background: #3c3c3c; border-radius: 4px; display: flex; align-items: center; padding: 0 8px; font-size: 24px; }
.mode { display: flex; align-items: center; gap: 4px; height: 55px; }
.mode span { padding-top: 2px; font-weight: 300; letter-spacing: .2px; }
.active { background: #d9820b; width: 164px; padding-left: 5px; border-radius: 2px; }
.chev { margin: 0 11px 0 4px; }

.workspace { height: 895px; flex: none; display: flex; flex-direction: column; gap: 6px; padding-top: 6px; }
.upper { height: 617px; display: flex; gap: 7px; padding-left: 1px; }
.lower { height: 266px; display: flex; gap: 6px; padding-left: 1px; }
.left-col { width: 286px; display: flex; flex-direction: column; gap: 6px; }
.dock { display: flex; flex-direction: column; }
.dock-body { flex: 1; background: #606060; min-height: 0; }
.tab { width: 188px; height: 27px; flex: none; margin-left: 5px; padding: 0 13px 0 8px; background: #606060; border-radius: 4px 4px 0 0; display: flex; align-items: center; color: #e6e6e6; text-shadow: 1px 1px 1px #000; font-size: 15px; }
.tab span { margin-left: 7px; padding-top: 1px; }
.tab .x { margin-left: auto; }
.search { height: 22px; background: #cbcbcb; color: #8f8f8f; border-radius: 3px; display: flex; align-items: center; justify-content: space-between; padding: 0 1px 0 6px; font-size: 15px; flex: none; }
.search span { padding-top: 1px; }
.inner { background: #3e3e3e; border-radius: 4px; }

.palette { height: 305px; }
.palette .tab { height: 26px; }
.palette .search { margin: 8px 7px 5px 8px; }
.palette-area { display: flex; height: 240px; margin: 0 2px 4px 3px; }
.palette-list { width: 261px; margin: 0; padding: 0; list-style: none; background: #3e3e3e; overflow: hidden; box-shadow: inset 0 5px 5px -3px #181818, inset 0 -7px 7px -4px #181818; letter-spacing: .35px; }
.palette-list li { height: 25px; display: flex; align-items: center; padding-left: 27px; gap: 3px; }
.palette-list svg { width: 20px; height: 16px; }
.gutter { flex: 1; padding: 52px 4px 0 3px; box-shadow: inset 0 5px 5px -3px #282828, inset 0 -6px 6px -4px #282828; }
.thumb { height: 134px; width: 13px; background: #fff; border-radius: 2px; box-shadow: 0 0 0 1px #333; }

.hierarchy { height: 306px; }
.hierarchy .dock-body { padding: 2px 2px 2px 3px; }
.hierarchy .inner { height: 274px; padding: 8px 3px 0 2px; }
.hierarchy .search { margin: 0 5px 5px; }
.tree { display: flex; align-items: center; height: 20px; padding-right: 4px; letter-spacing: .1px; color: #e5e5e5; }
.root { gap: 5px; padding-left: 1px; }
.root b { font-weight: 600; font-size: 16px; letter-spacing: .22px; }
.sel { background: #888; color: #000; padding-left: 13px; }
.sel span { letter-spacing: .55px; }
.sel .pi { margin: 0 6px 0 4px; color: #bbb; }
.lk { margin-left: auto; margin-right: 6px; }
.child { padding-left: 41px; }
.child span { margin-left: 5px; width: 170px; overflow: hidden; flex: none; font-size: 15px; letter-spacing: .15px; }
.child .lk { margin-left: 3px; }

.designer { width: 1199px; border: 2px solid #606060; border-bottom-width: 3px; position: relative; }
.surface { width: 1195px; height: 612px; }
.surface text { fill: #999; font-size: 14px; }
.surface .popup-text { fill: #fff; font-size: 25px; font-weight: 350; }
.surface .info text { fill: #fff; fill-opacity: .25; font-size: 25px; font-weight: 600; }
.canvas-tools { position: absolute; left: 648px; top: 24px; display: flex; align-items: center; color: #111; }
.ct { height: 30px; background: #b2b2b2; border-radius: 8px; display: flex; align-items: center; justify-content: center; overflow: hidden; box-shadow: 0 0 0 1px #111; font-size: 15px; }
.ct span { height: 30px; display: flex; align-items: center; justify-content: center; border-right: 1px solid #111; }
.ct span:last-child, .ct .nb { border: 0; }
.ct .col { flex-direction: column; font-weight: 500; line-height: 17px; }
.ct .b { font-weight: 700; font-size: 16px; }
.ct .r { font-weight: 700; font-size: 18px; color: #555; }
.on { background: #bb6f08; }
.ct.off { background: #6b6b6b; box-shadow: none; }
.text { height: 26px; gap: 2px; font-weight: 600; white-space: nowrap; }
.w28 { width: 28px; } .w29 { width: 29.500px; } .w30 { width: 31px; } .w50 { width: 50.500px; } .w83 { width: 83px; } .w95 { width: 95px; }
.g2 { margin-right: 2px; } .g5 { margin-right: 5px; } .g6 { margin-right: 6px; }

.details { width: 420px; }
.details .tab { height: 26px; }
.details .dock-body { padding: 3px 3px 2px; overflow: hidden; }
.name-row { display: flex; align-items: center; height: 22px; padding-left: 2px; color: #ddd; }
.field { background: #d8d8d8; border-radius: 4px; color: #000; height: 25px; }
.name { width: 250px; flex: none; height: 22px; background: #dfdfdf; margin: 0 9px 0 5px; padding: 2px 7px; font-size: 15px; letter-spacing: .5px; }
.check { width: 18px; height: 18px; background: #aaa; border-radius: 3px; flex: none; display: flex; align-items: center; justify-content: center; }
.check.on { background: #c6c6c6; margin-left: 1px; }
.check.v { margin-left: 1px; }
.isvar { margin-left: 5px; width: 78px; flex: none; padding-top: 3px; }
.name-row a { border-bottom: 1px dotted #ddd; flex: none; letter-spacing: .4px; }
.find-row { display: flex; align-items: center; height: 30px; margin: 8px 0 2px; padding-left: 5px; }
.find-row .search { width: 319px; margin-right: 11px; }
.btn { background: linear-gradient(#d6d6d6, #b2b2b2 60%, #a6a6a6); border: 1px solid #e0e0e0; box-shadow: 0 0 0 1px #1e1e1e; border-radius: 2px; color: #000; display: flex; align-items: center; justify-content: center; flex: none; }
.matrix { width: 33px; height: 28px; }
.view { margin: 0 4px 0 6px; }
.vd { color: #bbb; }
.props { width: 414px; display: flex; flex-direction: column; position: relative; height: 523px; }
.sect { background: #3e3e3e; border-radius: 4px; overflow: hidden; display: flex; flex-direction: column; flex: none; }
.behavior { height: 171px; margin-bottom: 2px; } .transform { height: 105px; margin-bottom: 3px; } .perf { height: 72px; margin-bottom: 3px; } .clip { height: 75px; margin-bottom: 2px; } .navi { height: 90px; }
.sect h3 { margin: 0; height: 27px; flex: none; background: #2e2e2e; color: #e6e6e6; font-size: 16px; font-weight: 600; display: flex; align-items: center; gap: 4px; padding-left: 3px; text-shadow: 1px 1px 1px #000; letter-spacing: .22px; }
.sect h3 svg { color: #bbb; }
.perf h3, .clip h3 { height: 26px; }
.row { display: flex; align-items: center; flex: none; }
.row label { width: 117px; margin-left: 20px; flex: none; font-size: 13.500px; letter-spacing: .6px; color: #d0d0d0; }
.row label.ko { font-size: 14.500px; }
.row .k { margin-left: -17px; margin-right: 3px; }
.row .ex { margin: 0 -13px 2px 5px; }
.val { border-left: 1px solid #1c1c1c; align-self: stretch; flex: 1; display: flex; align-items: center; padding-left: 4px; }
.h30 { height: 30px; } .h31 { height: 31px; } .h32 { height: 32px; }
.fill { flex: 1; }
.f138 { width: 138px; margin-right: 8px; } .f131 { width: 131px; }
.num { height: 21px; display: flex; align-items: center; padding: 0 7px 0 5px; font-size: 14px; letter-spacing: .1px; }
.num svg { margin-left: auto; }
.xy { width: 113px; margin-right: 4px; gap: 8px; }
.bind { width: 64px; height: 22px; font-size: 14.500px; gap: 1px; padding-top: 1px; }
.push { margin-left: auto; margin-right: 24px; }
.mid { margin-left: 27px; }
.combo { height: 23px; margin-left: 1px; padding: 0 8px 0 6px; justify-content: space-between; font-size: 14px; letter-spacing: .42px; }
.combo span { overflow: hidden; }
.c156 { width: 155px; } .c129 { width: 128px; }
.esc { width: 47px; height: 21px; margin-left: 1px; gap: 3px; }
.more { height: 18px; margin-top: auto; background: #464646; border-top: 1px solid #383838; display: flex; align-items: center; justify-content: center; padding-right: 21px; }
.props-thumb { position: absolute; left: 398px; top: 1px; width: 13px; height: 421px; background: #fff; box-shadow: 0 0 0 1px #444; border-radius: 1px; }

.anims { width: 287px; }
.lower .dock { height: 265px; }
.anims .dock-body { padding: 3px; }
.anims .inner { height: 232px; padding: 5px 2px 0; }
.anim-bar { display: flex; align-items: center; padding-left: 3px; gap: 3px; height: 25px; }
.anim-bar .search { width: 166px; height: 23px; }
.green { width: 100px; height: 25px; background: #4ea64e; border: 1px solid #3c8a3c; border-radius: 2px; color: #fff; font-weight: 500; display: flex; align-items: center; justify-content: center; gap: 3px; text-shadow: 1px 1px 1px #000; flex: none; font-size: 15px; white-space: nowrap; }
.anim-item { margin-top: 3px; height: 22px; background: #888; color: #111; padding: 2px 4px; letter-spacing: .5px; }

.timeline { width: 1626px; }
.tabs { display: flex; gap: 1px; }
.tabs .back { margin-left: 0; background: #404040; }
.tabs .cur { border-top: 1px solid #b9a82a; }
.tabs .back span { margin-left: 8px; }
.timeline .dock-body { padding: 3px 3px 3px 2px; }
.seq-bar { height: 39px; background: #3e3e3e; border-radius: 4px 4px 0 0; display: flex; align-items: center; padding: 0 0 1px 15px; color: #b0b0b0; }
.s2 { margin-left: 19px; } .d1 { margin-left: 5px; } .s3 { margin-left: 27px; } .d2 { margin-left: 8px; } .s4 { margin-left: 25px; } .d3 { margin-left: 9px; }
.seq-bar .sep { height: 38px; }
.p1 { margin-left: 11px; } .s5 { margin: 0 13px 0 13px; }
.magnet { width: 40px; height: 38px; margin-left: 6px; background: #d9820b; border-radius: 2px; display: flex; align-items: center; justify-content: center; }
.d4 { margin-left: 15px; } .p3 { margin-left: 10px; }
.fps { margin-left: 14px; width: 45px; color: #ddd; letter-spacing: .3px; font-size: 15.500px; }
.p4 { margin-left: 18px; } .s6 { margin-left: 13px; } .s7 { margin-left: 13px; }
.seq-main { display: flex; height: 193px; justify-content: space-between; }
.seq-left { width: 486px; display: flex; flex-direction: column; }
.filter-bar { height: 33px; background: #3e3e3e; display: flex; align-items: center; padding-left: 8px; gap: 3px; flex: none; z-index: 1; box-shadow: 0 3px 5px #181818; border-radius: 0 0 4px 4px; }
.filter-bar .green { width: 74px; gap: 5px; }
.filter-bar .search { width: 334px; height: 23px; }
.now { color: #d98a1a; margin-left: 9px; font-size: 15.500px; letter-spacing: .3px; }
.tracks { height: 93px; display: flex; flex-direction: column; justify-content: flex-end; overflow: hidden; background: #3e3e3e; flex: none; border-right: 7px solid #484848; }
.track { height: 19px; flex: none; display: flex; align-items: center; color: #888; padding-right: 9px; }
.track b { font-weight: 500; color: #eee; margin-left: 54px; width: 245px; }
.track u { text-decoration: none; width: 27px; text-align: center; border-bottom: 1px dotted #aaa; color: #999; letter-spacing: .4px; font-size: 15.500px; }
.nv { margin-left: auto; }
.group { height: 23px; padding-bottom: 3px; }
.group > :first-child { margin: 0 10px 0 22px; }
.group span { color: #ddd; letter-spacing: .15px; font-size: 15.500px; }
.add { margin-left: auto; opacity: .8; }
.group .nv { margin-left: 16px; }
.hl { background: #484848; color: #ddd; }
.transport { margin-top: auto; height: 41px; background: #3e3e3e; border-radius: 4px; box-shadow: 0 -26px 0 #606060; }
.seq-view { width: 1131px; height: 193px; }
.seq-view text { fill: #8f8f8f; font-size: 14px; letter-spacing: .75px; }
.seq-view text.out { fill: #676767; }
.seq-view text.head-time { fill: #f0f0f0; font-size: 15.500px; letter-spacing: .1px; }

.taskbar { height: 50px; flex: none; background: #000308; display: flex; align-items: stretch; }
.start { width: 60px; display: flex; align-items: center; justify-content: center; }
.win-search { width: 430px; background: #333; color: #9b9b9b; font: 18.500px/52px "Open Sans", "Noto Sans CJK KR", sans-serif; letter-spacing: -.2px; padding-left: 10px; }
.app { display: flex; align-items: center; justify-content: center; width: 60px; }
.run { border-bottom: 3px solid #76b9ed; padding-top: 3px; }
.chrome { width: 51px; margin: 0 5px 0 9px; }
.folder { width: 62px; } .store { width: 62px; padding-bottom: 2px; }
.unreal { background: #33373c; width: 61px; padding-right: 1px; }
.tray { margin-left: auto; overflow: visible; }
.tray text { fill: #fff; font-family: "Noto Sans CJK KR", sans-serif; font-size: 15px; }
.tray .ime { fill: #000; }
.tray .badge { font-size: 14px; font-weight: 700; }
```
FILE: script.js
```js
const NS = 'http://www.w3.org/2000/svg';
function add(id, tag, attrs, text) {
  const el = document.createElementNS(NS, tag);
  for (const k in attrs) el.setAttribute(k, attrs[k]);
  if (text !== undefined) el.textContent = text;
  document.getElementById(id).appendChild(el);
}
const vline = (x, y1, y2) => `M${Math.floor(x) + 0.5} ${y1}V${y2}`;
const hline = (y, x1, x2) => `M${x1} ${Math.floor(y) + 0.5}H${x2}`;

// designer grid: minor every 13.33px, major every tenth line
let minor = '', major = '', origin = '';
for (let i = -14; i < 74; i++) {
  const x = 515.3 + i * 13.333;
  if (x < 320 || x > 1491) continue;
  if (i === 0) origin += vline(x, 166, 755);
  else if (i % 10 === 0) major += vline(x, 166, 755);
  else minor += vline(x, 166, 755);
}
for (let i = -6; i < 39; i++) {
  const y = 246.3 + i * 13.333;
  if (y < 167 || y > 755) continue;
  if (i === 0) origin += hline(y, 319, 1491);
  else if (i % 10 === 0) major += hline(y, 319, 1491);
  else minor += hline(y, 319, 1491);
}
add('grid', 'path', { d: minor, stroke: '#333' });
add('grid', 'path', { d: major, stroke: '#171717' });
add('grid', 'path', { d: origin, stroke: '#000' });

// rulers: a tick per 50 units, labels per 500
let ticks = '';
for (let i = -9; i < 47; i++) {
  const x = 516.3 + i * 20.833;
  if (x > 1490 || x < 320) continue;
  ticks += vline(x, i % 10 === 0 ? 157 : i % 5 === 0 ? 158 : 162, 166);
  if (i % 10 === 0) add('ruler', 'text', { x: x - 0.5, y: 158, 'text-anchor': 'middle' }, i * 50);
}
for (let i = -3; i < 25; i++) {
  const y = 247.3 + i * 20.8;
  if (y > 755) continue;
  ticks += hline(y, i % 10 === 0 ? 309 : i % 5 === 0 ? 311 : 315, 319);
  if (i % 10 === 0) {
    const digits = String(i * 50).split('');
    digits.forEach((d, n) => add('ruler', 'text', { x: 304, y: y + 5 + (n - (digits.length - 1) / 2) * 13 - (i ? 1 : 0), 'text-anchor': 'middle' }, d));
  }
}
add('ruler', 'path', { d: ticks, stroke: '#777' });

// timeline ticks: major per half second; the playhead carries the 1.00 s label
let big = '', small = '', lines = '';
for (let k = -1; k < 12; k++) {
  const x = 880.6 + k * 94;
  if (k >= 0) { big += vline(x, 855, 866) + vline(x, 985, 996); lines += vline(x, 866, 983); }
  if (k < 11) small += vline(x + 47, 859, 866) + vline(x + 47, 985, 992);
  if (k < 11 && k !== 2) [864, 999].forEach(y => add('seq-ticks', 'text', { x: x + 6.5, y, class: k < 0 || k > 3 ? 'out' : 'in' }, (k / 2).toFixed(2) + ' s'));
}
add('seq-grid', 'path', { d: lines, stroke: '#1f1f1f' });
add('seq-ticks', 'path', { d: big + small, stroke: '#c8c8c8' });
```
